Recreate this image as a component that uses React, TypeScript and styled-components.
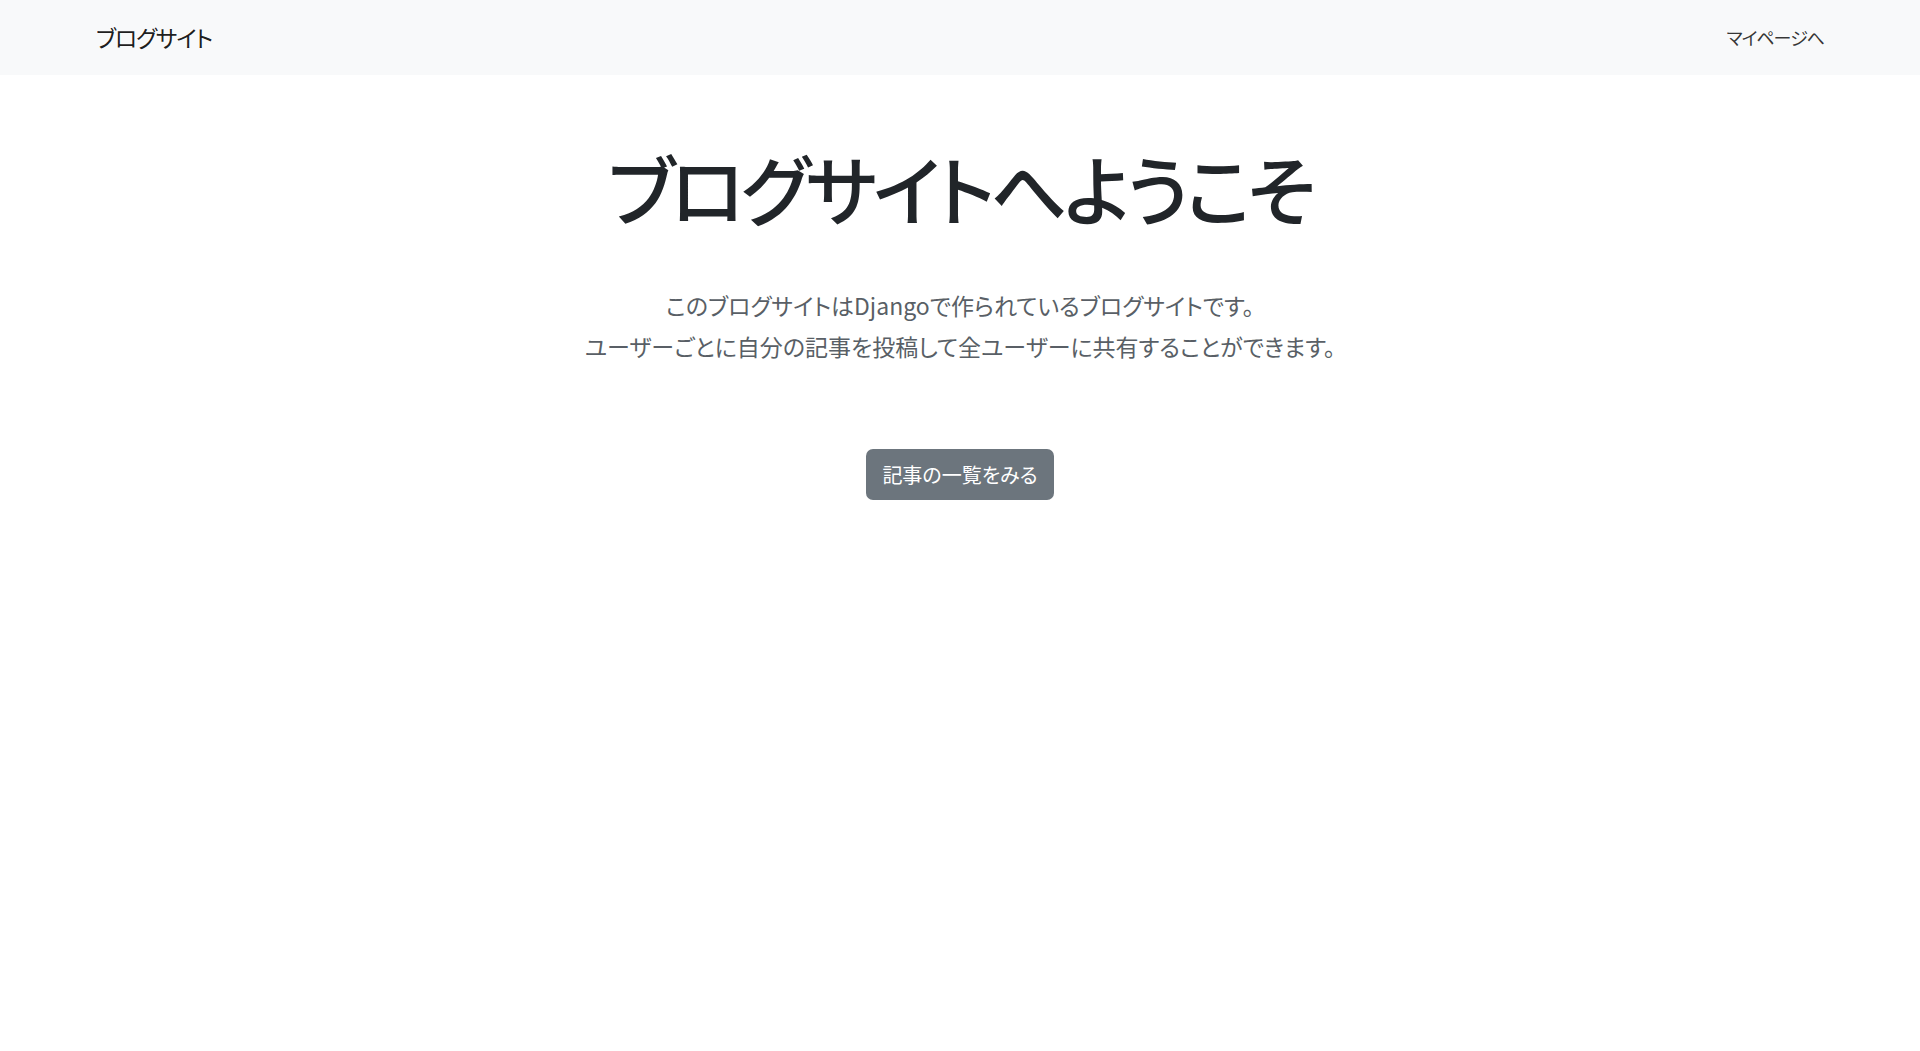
import React from "react";
import styled, { createGlobalStyle } from "styled-components";

const GlobalStyle = createGlobalStyle`
    body {
        margin: 0;
        background: #fff;
        font-family: "Noto Sans CJK JP", "Noto Sans", sans-serif;
        color: #212529;
    }
`;

const Navbar = styled.nav`
    height: 75px;
    background-color: #f8f9fa;
    padding: 0 96px;
    display: flex;
    align-items: center;
    justify-content: space-between;
`;

const Brand = styled.a`
    font-size: 23px;
    letter-spacing: -1.2px;
    color: rgba(0, 0, 0, 0.9);
    text-decoration: none;
    font-feature-settings: "palt";
    margin-top: -2px;
`;

const NavLink = styled.a`
    font-size: 18px;
    letter-spacing: -1px;
    color: rgba(0, 0, 0, 0.8);
    text-decoration: none;
    font-feature-settings: "palt";
    margin-top: -1px;
`;

const Hero = styled.main`
    display: flex;
    flex-direction: column;
    align-items: center;
    text-align: center;
    padding-top: 67px;
`;

const Title = styled.h1`
    margin: 0;
    font-size: 76px;
    letter-spacing: -4px;
    font-weight: 500;
    line-height: 1.2;
    color: #212529;
    font-feature-settings: "palt";
`;

const Lead = styled.p`
    margin: 52px 0 0;
    font-size: 23px;
    line-height: 41px;
    color: #595f66;
    font-feature-settings: "palt";
`;

const Button = styled.a`
    margin-top: 82px;
    display: inline-flex;
    align-items: center;
    justify-content: center;
    width: 188px;
    height: 51px;
    box-sizing: border-box;
    border-radius: 7px;
    background-color: #6c757d;
    color: #fff;
    font-size: 20px;
    text-decoration: none;
    font-feature-settings: "palt";
`;

const App: React.FC = () => {
    return (
        <>
            <GlobalStyle />
            <Navbar>
                <Brand href="#">ブログサイト</Brand>
                <NavLink href="#">マイページへ</NavLink>
            </Navbar>
            <Hero>
                <Title>ブログサイトへようこそ</Title>
                <Lead>
                    このブログサイトはDjangoで作られているブログサイトです。
                    <br />
                    ユーザーごとに自分の記事を投稿して全ユーザーに共有することができます。
                </Lead>
                <Button href="#">記事の一覧をみる</Button>
            </Hero>
        </>
    );
};

export default App;
